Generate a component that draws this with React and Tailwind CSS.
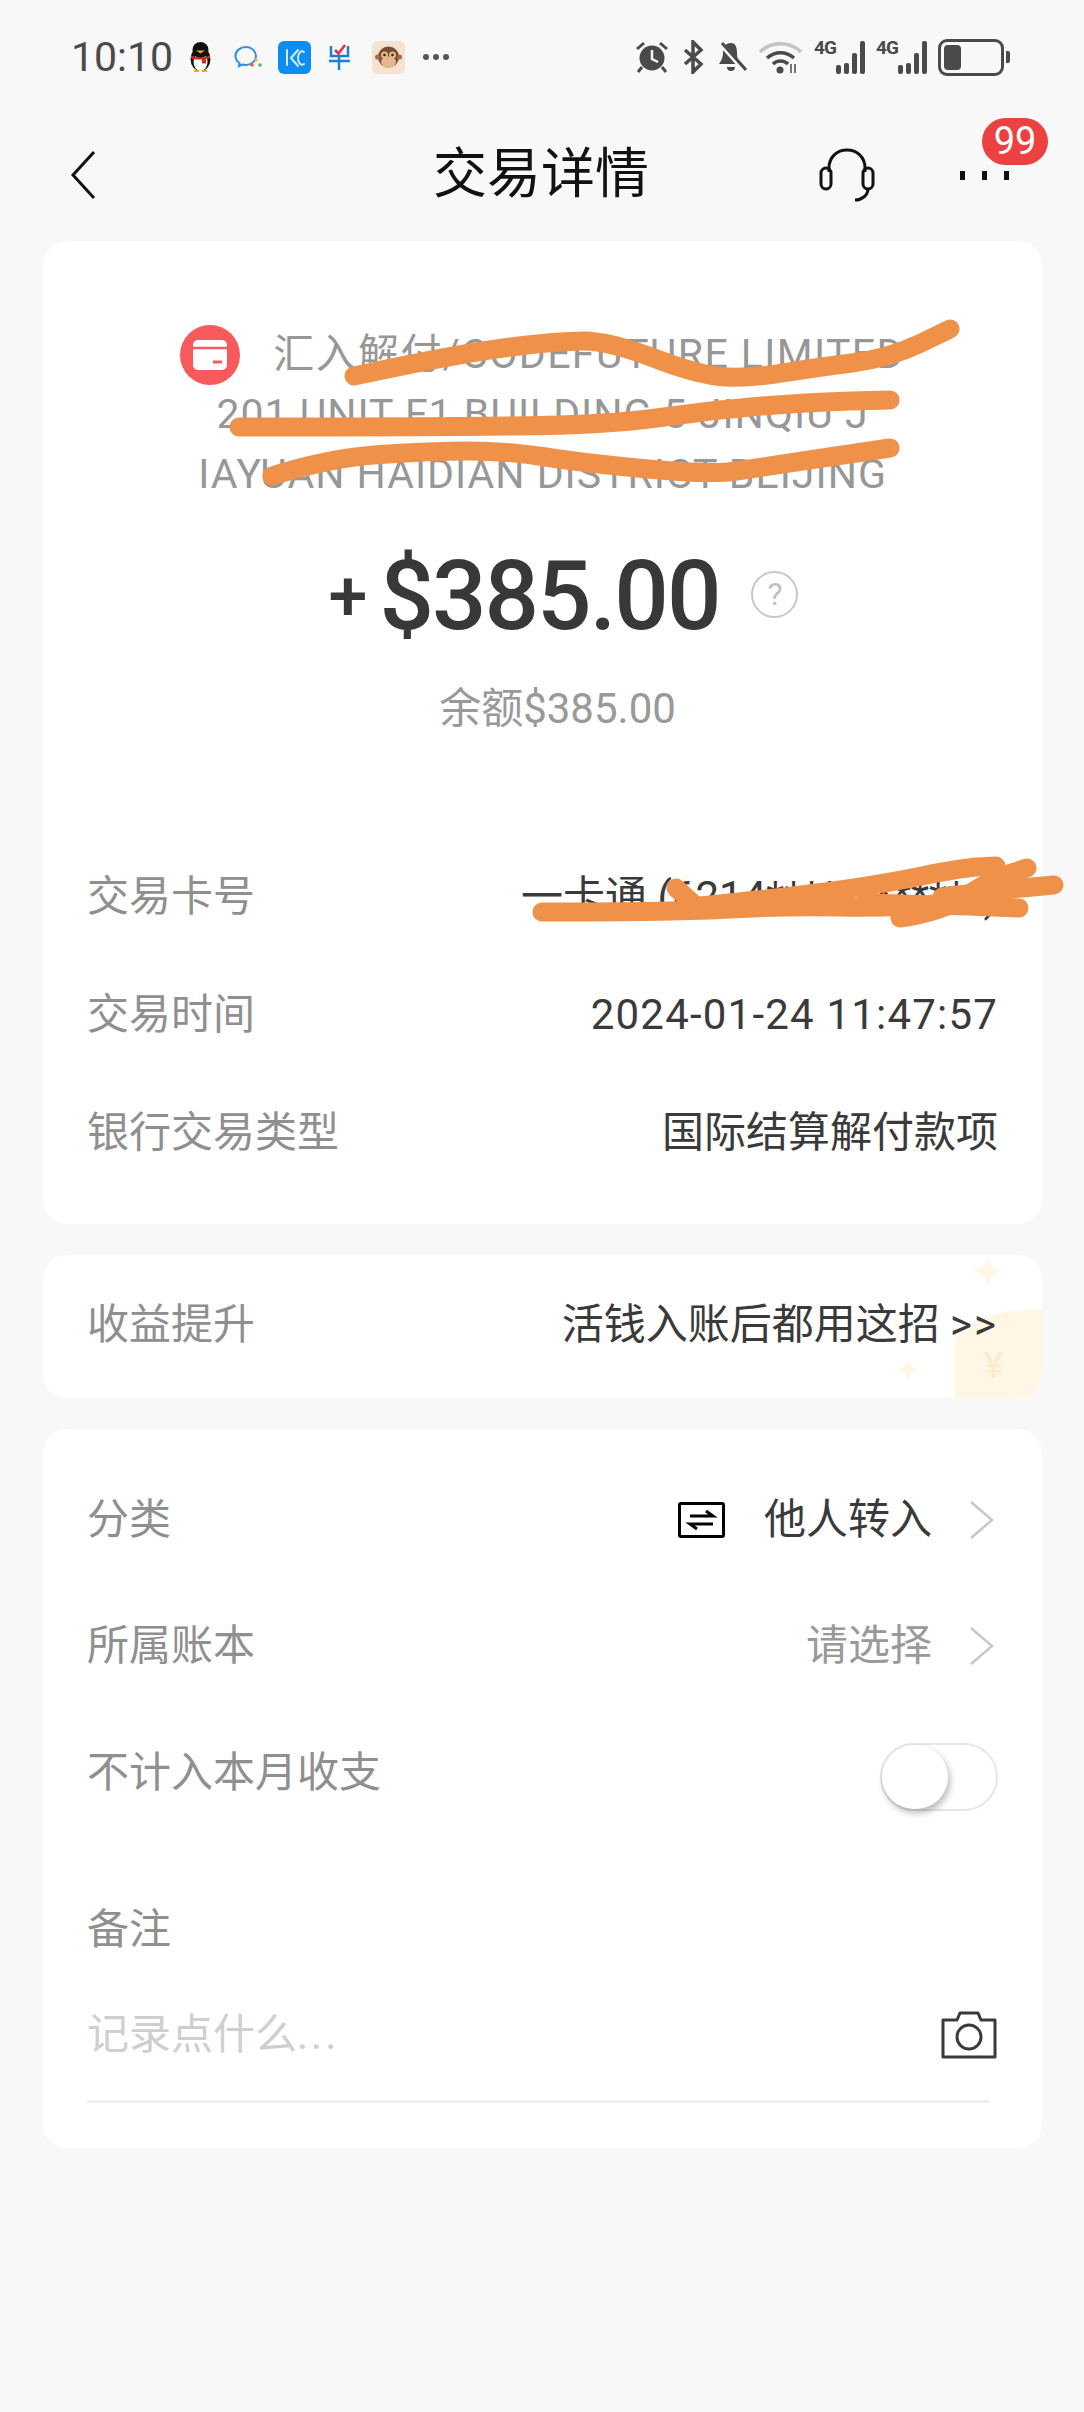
import React from "react";

// turn hand-picked points into a soft marker stroke
function smooth(pts) {
  let d = `M${pts[0][0]} ${pts[0][1]}`;
  for (let i = 1; i < pts.length - 1; i++) {
    const mx = (pts[i][0] + pts[i + 1][0]) / 2;
    const my = (pts[i][1] + pts[i + 1][1]) / 2;
    d += ` Q${pts[i][0]} ${pts[i][1]} ${mx} ${my}`;
  }
  const last = pts[pts.length - 1];
  return d + ` L${last[0]} ${last[1]}`;
}

const STROKES = [
  [[354, 376], [456, 354], [558, 341], [609, 341], [701, 376], [752, 378], [813, 368], [890, 358], [950, 329]],
  [[239, 427], [420, 427], [609, 425], [711, 410], [813, 402], [890, 400]],
  [[272, 476], [329, 458], [431, 451], [507, 451], [584, 463], [711, 475], [762, 467], [890, 448]],
  [[542, 912], [680, 912], [780, 906], [900, 908], [1000, 898]],
  [[676, 888], [696, 906]],
  [[700, 906], [800, 896], [888, 883], [961, 868], [996, 866]],
  [[900, 918], [942, 912], [990, 880], [1027, 868]],
  [[865, 903], [940, 905], [1019, 908]],
  [[942, 897], [1000, 890], [1054, 885]],
];

function Scribbles() {
  return (
    <svg className="absolute left-0 top-0 pointer-events-none" width="1084" height="2412" viewBox="0 0 1084 2412" fill="none">
      {STROKES.map((pts, i) => (
        <path key={i} d={smooth(pts)} stroke="#F09149" strokeWidth="19" strokeLinecap="round" strokeLinejoin="round" />
      ))}
    </svg>
  );
}

function Penguin() {
  return (
    <svg width="27" height="30" viewBox="0 0 27 30">
      <ellipse cx="13.5" cy="17" rx="10" ry="12" fill="#111" />
      <ellipse cx="13.5" cy="20" rx="7" ry="9" fill="#fff" />
      <circle cx="13.5" cy="8" r="8" fill="#111" />
      <path d="M9 8.5h9l-4.5 3z" fill="#f5a623" />
      <path d="M4 13.5c6 2.5 13 2.5 19 0v3H19v5h-4v-4c-4 0-8 0-11-1z" fill="#d8261c" />
      <path d="M7 28h5v2H7zM15 28h5v2h-5z" fill="#f5a623" />
    </svg>
  );
}

function ChatApp() {
  return (
    <svg width="30" height="25" viewBox="0 0 30 25" fill="none">
      <path d="M13 2C7 2 2.500 6 2.500 11c0 3 1.500 5.500 4 7l-.5 3 3.500-1.500c1 .3 2.300.5 3.500.5 5.500 0 10-4 10-9s-4.500-9-10-9z" stroke="#2f8fe0" strokeWidth="2" />
      <circle cx="23" cy="15" r="1.800" fill="#f5b82e" />
      <circle cx="19" cy="20" r="1.800" fill="#ea5a3c" />
      <circle cx="27" cy="20" r="1.800" fill="#58b368" />
    </svg>
  );
}

function BlueApp() {
  return (
    <svg width="33" height="33" viewBox="0 0 33 33" fill="none">
      <rect width="33" height="33" rx="6" fill="#0f8cf0" />
      <path d="M9 9v15M13 17l7-8M13 17l7 8M26 11c-3-2-6 1-6 6s3 8 6 6" stroke="#cfeeff" strokeWidth="2" strokeLinecap="round" />
    </svg>
  );
}

function BiApp() {
  return (
    <svg width="24" height="26" viewBox="0 0 24 26" fill="none">
      <path d="M4 2v10h17V2M2 17h21M12 12v14" stroke="#1d7fd1" strokeWidth="2.500" />
      <path d="M8 6l3.500 3.500L18 1" stroke="#e0314b" strokeWidth="2.500" />
    </svg>
  );
}

function Monkey() {
  return (
    <svg width="33" height="33" viewBox="0 0 33 33">
      <rect width="33" height="33" rx="6" fill="#f5e2d0" />
      <circle cx="16.500" cy="16" r="10.500" fill="#7a4d33" />
      <circle cx="5.500" cy="16" r="2.500" fill="#a8694a" />
      <circle cx="27.500" cy="16" r="2.500" fill="#a8694a" />
      <ellipse cx="16.500" cy="21" rx="7.500" ry="5.500" fill="#e5b78f" />
      <circle cx="12.500" cy="14" r="3.500" fill="#e5b78f" />
      <circle cx="20.500" cy="14" r="3.500" fill="#e5b78f" />
      <circle cx="12.500" cy="14" r="1.300" fill="#3a241a" />
      <circle cx="20.500" cy="14" r="1.300" fill="#3a241a" />
    </svg>
  );
}

function Alarm() {
  return (
    <svg width="36" height="34" viewBox="0 0 36 34" fill="#4a4a4a">
      <circle cx="18" cy="18" r="12.500" />
      <path d="M18 10v9l6 3" stroke="#f8f8f8" strokeWidth="2.500" fill="none" />
      <path d="M2 8l7-6 2 2-7 6zM34 8l-7-6-2 2 7 6z" />
      <path d="M8 27l-4 5M28 27l4 5" stroke="#4a4a4a" strokeWidth="3" />
    </svg>
  );
}

function Bt() {
  return (
    <svg width="25" height="34" viewBox="0 0 25 34" fill="none">
      <path d="M4 10l16 14-8 8V2l8 8L4 24" stroke="#4a4a4a" strokeWidth="3.500" />
    </svg>
  );
}

function BellMute() {
  return (
    <svg width="30" height="34" viewBox="0 0 30 34" fill="#4a4a4a">
      <path d="M14 3c-6 0-8 5-8 10 0 5-2 8-4 11h21c-2-3-3-6-3-11 0-5-1-10-6-10z" />
      <path d="M10 27h8a4 4 0 0 1-8 0z" />
      <path d="M4 4l24 27" stroke="#f8f8f8" strokeWidth="5" />
      <path d="M5 3l24 27" stroke="#4a4a4a" strokeWidth="3" />
    </svg>
  );
}

function Wifi() {
  return (
    <svg width="45" height="34" viewBox="0 0 45 34" fill="none">
      <path d="M2 12c11-11 30-11 41 0" stroke="#c4c4c4" strokeWidth="3.500" />
      <path d="M9 18c8-7 19-7 27 0" stroke="#4a4a4a" strokeWidth="3.500" />
      <path d="M15 24c4-4 11-4 15 0" stroke="#4a4a4a" strokeWidth="3.500" />
      <circle cx="22" cy="30" r="3.500" fill="#4a4a4a" />
      <path d="M33 24v9M37 33v-9" stroke="#4a4a4a" strokeWidth="1.500" />
    </svg>
  );
}

function Signal() {
  return (
    <div className="relative w-[51px] h-[33px] flex items-end justify-end gap-[3px]">
      <span className="absolute left-0 top-[-3px] text-[19px] leading-[20px] font-bold tracking-[-1px] text-[#4a4a4a]">4G</span>
      <div className="w-[5px] h-[9px] rounded-[2px] bg-[#4a4a4a]" />
      <div className="w-[5px] h-[11px] rounded-[2px] bg-[#4a4a4a]" />
      <div className="w-[5px] h-[21px] rounded-[2px] bg-[#4a4a4a]" />
      <div className="w-[5px] h-[33px] rounded-[2px] bg-[#4a4a4a]" />
    </div>
  );
}

function Battery() {
  return (
    <div className="flex items-center gap-[2px]">
      <div className="w-[66px] h-[37px] rounded-[9px] border-[3px] border-[#4a4a4a] p-[3px]">
        <div className="w-[17px] h-full rounded-[4px] bg-[#4a4a4a]" />
      </div>
      <div className="w-[4px] h-[12px] rounded-r-[2px] bg-[#4a4a4a]" />
    </div>
  );
}

function StatusBar() {
  return (
    <div className="h-[114px] pl-[71px] pr-[74px] flex items-center justify-between">
      <div className="flex items-center">
        <span className="text-[41px] leading-none text-[#4a4a4a] w-[116px]">10:10</span>
        <Penguin />
        <div className="ml-[19px]"><ChatApp /></div>
        <div className="ml-[15px]"><BlueApp /></div>
        <div className="ml-[16px]"><BiApp /></div>
        <div className="ml-[21px]"><Monkey /></div>
        <div className="ml-[18px] flex gap-[4px]">
          <div className="w-[6px] h-[6px] rounded-full bg-[#555]" />
          <div className="w-[6px] h-[6px] rounded-full bg-[#555]" />
          <div className="w-[6px] h-[6px] rounded-full bg-[#555]" />
        </div>
      </div>
      <div className="flex items-center gap-[11px]">
        <Alarm />
        <Bt />
        <BellMute />
        <Wifi />
        <Signal />
        <Signal />
        <Battery />
      </div>
    </div>
  );
}

function NavBar() {
  return (
    <div className="relative h-[122px] mb-[5px] pl-[68px] pr-[69px] flex items-center justify-between">
      <svg width="30" height="50" viewBox="0 0 30 50" fill="none">
        <path d="M26 2L5 25l21 23" stroke="#111" strokeWidth="3" />
      </svg>
      <div className="absolute left-[433px] w-[216px] text-center text-[54px] leading-none text-[#111]">交易详情</div>
      <div className="flex items-center">
        <svg width="56" height="54" viewBox="0 0 56 54" fill="none" stroke="#111" strokeWidth="3">
          <path d="M10 24V20C10 9 18 2 28 2s18 7 18 18v4" />
          <rect x="2" y="20" width="10" height="21" rx="5" />
          <rect x="44" y="20" width="10" height="21" rx="5" />
          <path d="M49 41c0 6-6 11-13 11" />
        </svg>
        <div className="relative ml-[85px] flex gap-[17px] w-[55px]">
          <div className="w-[5px] h-[9px] bg-[#111]" />
          <div className="w-[5px] h-[9px] bg-[#111]" />
          <div className="w-[5px] h-[9px] bg-[#111]" />
          <div className="absolute left-[22px] top-[-53px] w-[66px] h-[47px] rounded-full bg-[#EC4141] text-white text-[38px] leading-[47px] text-center">99</div>
        </div>
      </div>
    </div>
  );
}

function Row({ label, children, value }) {
  return (
    <div className="h-[118px] px-[44px] flex items-center justify-between text-[42px] leading-none">
      <span className="text-[#8f8f8f]">{label}</span>
      {children || <span className="text-[#3a3a3a]">{value}</span>}
    </div>
  );
}

function Chevron() {
  return (
    <svg width="25" height="40" viewBox="0 0 25 40" fill="none">
      <path d="M2 2l21 18L2 38" stroke="#c8c8c8" strokeWidth="2.500" />
    </svg>
  );
}

function Summary() {
  return (
    <div className="mx-[43px] w-[999px] rounded-[24px] bg-white pt-[83px] pb-[32px]">
      <div className="text-center text-[41px] leading-[60px] tracking-[1px] text-[#979797]">
        <span className="inline-flex align-top translate-y-[1px] mr-[33px] w-[60px] h-[60px] rounded-full bg-[#F65A5C] items-center justify-center">
          <svg width="36" height="32" viewBox="0 0 36 32" fill="none">
            <rect x="1" y="1" width="34" height="30" rx="5" fill="#fff" />
            <path d="M1 9h34" stroke="#F65A5C" strokeWidth="2.500" />
            <path d="M21 23h9" stroke="#F65A5C" strokeWidth="3" />
          </svg>
        </span>
        <span className="tracking-[1.4px]">汇入解付/CODEFUTURE LIMITED</span>
        <br />
        201 UNIT F1 BUILDING 5 JINQIU J
        <br />
        IAYUAN HAIDIAN DISTRICT BEIJING
      </div>
      <div className="mt-[40px] pl-[42px] h-[104px] flex items-center justify-center text-[#383838] font-medium">
        <span className="text-[70px] leading-none mr-[12px]">+</span>
        <span className="text-[96px] leading-none tracking-[-2px]">$385.00</span>
        <span className="ml-[32px] mb-[4px] w-[47px] h-[47px] rounded-full border-2 border-[#c8c8c8] text-[#c0c0c0] text-[32px] font-normal leading-[43px] text-center">?</span>
      </div>
      <div className="mt-[31px] pl-[30px] text-center text-[42px] leading-[60px] text-[#999]">余额$385.00</div>
      <div className="mt-[99px]">
        <Row label="交易卡号" value="一卡通 (6214************)" />
        <Row label="交易时间">
          <span className="text-[#3a3a3a] tracking-[1.2px]">2024-01-24 11:47:57</span>
        </Row>
        <Row label="银行交易类型" value="国际结算解付款项" />
      </div>
    </div>
  );
}

function Promo() {
  return (
    <div className="relative mt-[31px] mx-[43px] w-[999px] h-[143px] rounded-[24px] bg-white overflow-hidden flex items-center justify-between px-[44px] pb-[4px] text-[42px] leading-none">
      <svg className="absolute left-[818px] top-0" width="181" height="143" viewBox="0 0 181 143" fill="#FFF6E6">
        <path d="M127 0c2 12 6 14 18 15-12 2-16 6-18 17-2-11-6-15-18-17 12-1 16-3 18-15z" />
        <path d="M47 103c1 8 4 11 13 12-9 1-12 4-13 12-1-8-4-11-13-12 9-1 12-4 13-12z" />
        <path d="M94 90c0-22 40-36 87-36v89H94z" />
      </svg>
      <span className="absolute left-[941px] top-[93px] text-[36px] leading-none text-[#FCEBCB]">¥</span>
      <span className="relative text-[#8f8f8f]">收益提升</span>
      <span className="relative text-[#3a3a3a]">活钱入账后都用这招 <span className="tracking-[2px]">&gt;&gt;</span></span>
    </div>
  );
}

function Details() {
  return (
    <div className="mt-[31px] mx-[43px] w-[999px] h-[719px] rounded-[24px] bg-white pt-[28px]">
      <div className="h-[126px] pl-[44px] pr-[48px] flex items-center text-[42px] leading-none">
        <span className="text-[#8f8f8f]">分类</span>
        <svg className="ml-auto" width="47" height="36" viewBox="0 0 47 36" fill="none">
          <rect x="1.500" y="1.500" width="44" height="33" rx="1.500" stroke="#000" strokeWidth="3" />
          <path d="M12 14h23l-7-5M35 22H12l7 5" stroke="#000" strokeWidth="3" />
        </svg>
        <span className="ml-[39px] mr-[37px] text-[#3a3a3a]">他人转入</span>
        <Chevron />
      </div>
      <div className="h-[126px] pl-[44px] pr-[48px] flex items-center text-[42px] leading-none">
        <span className="text-[#8f8f8f]">所属账本</span>
        <span className="ml-auto mr-[37px] text-[#999]">请选择</span>
        <Chevron />
      </div>
      <div className="h-[128px] pl-[44px] pr-[44px] flex items-center justify-between text-[42px] leading-none">
        <span className="text-[#8f8f8f]">不计入本月收支</span>
        <div className="mt-[8px] w-[118px] h-[68px] rounded-full border-2 border-[#e6e6e6]">
          <div className="w-[66px] h-[64px] rounded-full bg-white shadow-[2px_4px_7px_rgba(0,0,0,0.28)]" />
        </div>
      </div>
      <div className="mt-[63px] px-[44px] text-[42px] leading-[60px] text-[#8f8f8f]">备注</div>
      <div className="mt-[45px] pl-[44px] pr-[44px] h-[60px] flex items-center justify-between text-[42px] leading-none text-[#cfcfcf]">
        <span>记录点什么<span className="tracking-[3px]">...</span></span>
        <svg width="58" height="48" viewBox="0 0 58 48" fill="none" stroke="#3a3a3a" strokeWidth="3">
          <path d="M3 9h14l3-7h18l3 7h14v37H3z" strokeLinejoin="round" />
          <circle cx="29" cy="26" r="12" />
        </svg>
      </div>
      <div className="mt-[35px] ml-[44px] w-[902px] h-[3px] bg-[#f0f0f0]" />
    </div>
  );
}

export default function App() {
  return (
    <div className="relative w-[1084px] h-[2412px] overflow-hidden bg-[#F8F8F8] font-['Roboto','Noto_Sans_CJK_SC',sans-serif]">
      <StatusBar />
      <NavBar />
      <Summary />
      <Promo />
      <Details />
      <Scribbles />
    </div>
  );
}
